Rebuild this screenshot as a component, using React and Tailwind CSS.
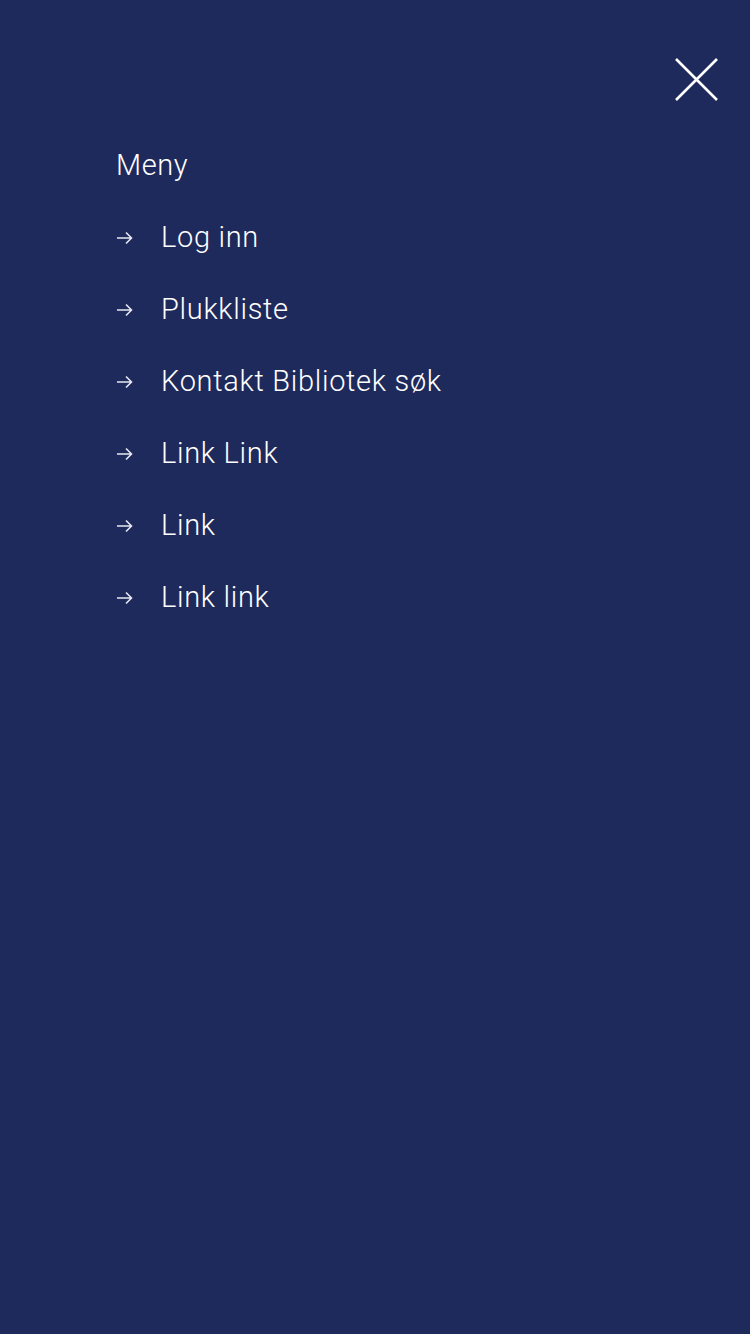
const LINKS = ["Log inn", "Plukkliste", "Kontakt Bibliotek søk", "Link Link", "Link", "Link link"]

function Arrow() {
  return (
    <svg width="18" height="14" viewBox="0 0 18 14" fill="none" className="shrink-0 mt-[2px]">
      <path d="M1 7h15M10 1.5l5.5 5.5-5.5 5.5" stroke="#e6e8f0" strokeWidth="1.6" />
    </svg>
  )
}

export default function App() {
  return (
    <div className="min-h-screen w-full bg-[#1f2a5c] text-white font-['Roboto',sans-serif]">
      {/* close */}
      <div className="flex justify-end pt-[57px] pr-[31px]">
        <button className="w-[45px] h-[45px]">
          <svg width="45" height="45" viewBox="0 0 45 45" fill="none">
            <path d="M2 2l41 41M43 2L2 43" stroke="#fff" strokeWidth="2.6" />
          </svg>
        </button>
      </div>

      <nav className="pl-[116px] pt-[46px]">
        <p className="text-[29px] font-light leading-[34px] tracking-[0.6px]">Meny</p>
        <ul className="mt-[38px] flex flex-col gap-[38px]">
          {LINKS.map(l => (
            <li key={l} className="flex items-center gap-[27px]">
              <Arrow />
              <span className="text-[29px] font-light leading-[34px] tracking-[0.7px]">{l}</span>
            </li>
          ))}
        </ul>
      </nav>
    </div>
  )
}
